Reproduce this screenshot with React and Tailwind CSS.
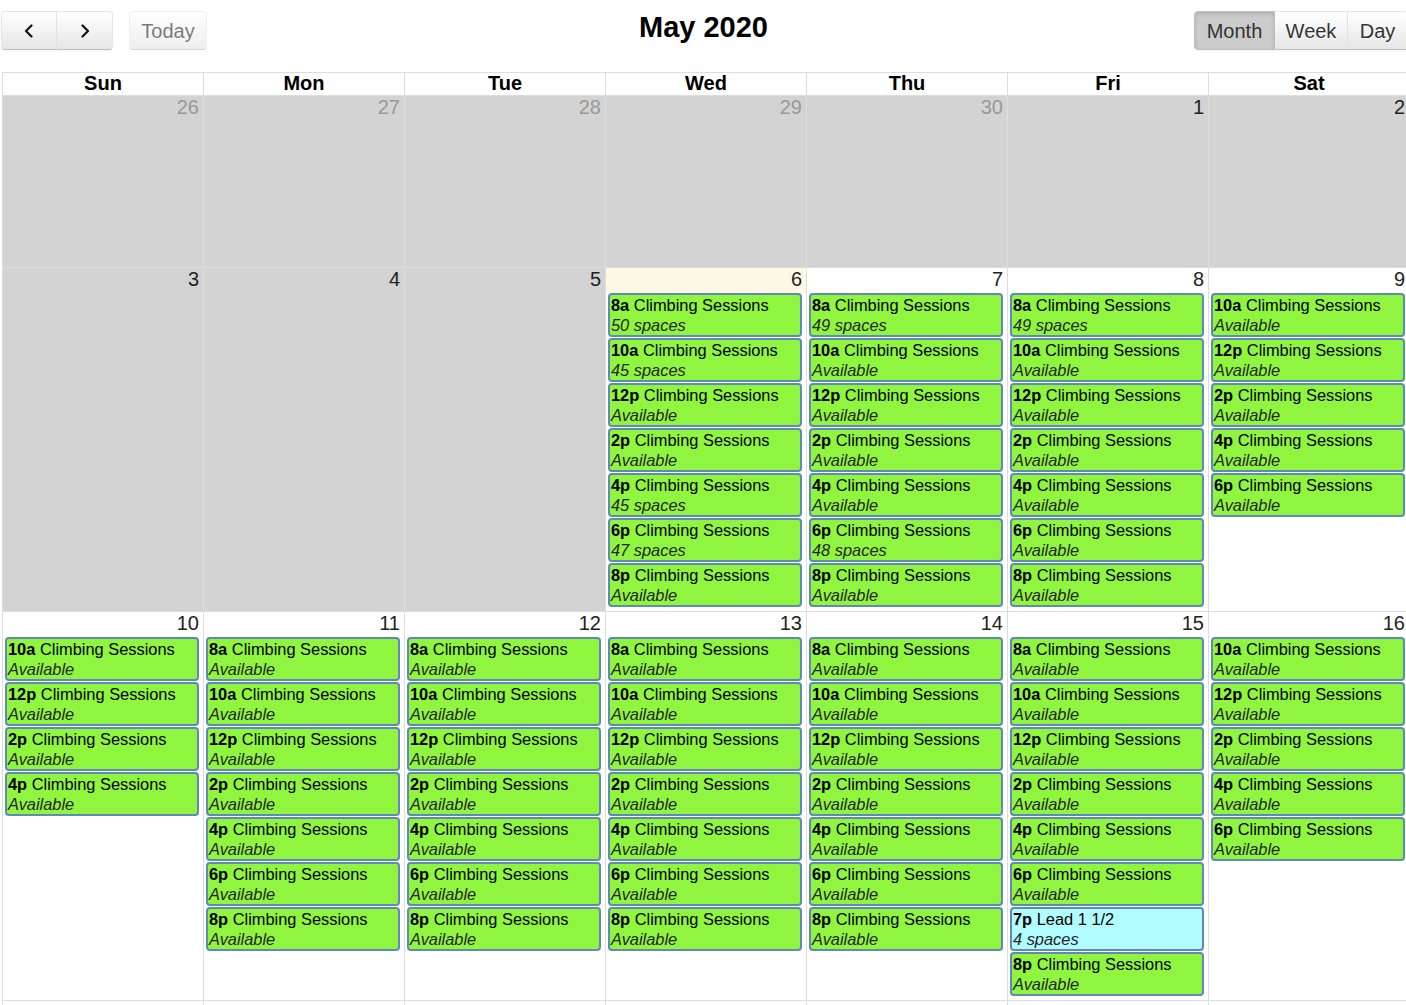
import React from "react";

const A = "Available";
const std7 = (spaces = {}) =>
  ["8a", "10a", "12p", "2p", "4p", "6p", "8p"].map((t) => ({ t, n: "Climbing Sessions", s: spaces[t] || A }));
const sat = () => ["10a", "12p", "2p", "4p", "6p"].map((t) => ({ t, n: "Climbing Sessions", s: A }));
const sun = () => ["10a", "12p", "2p", "4p"].map((t) => ({ t, n: "Climbing Sessions", s: A }));

const weeks = [
  {
    minH: "min-h-[172px]",
    days: [
      { d: 26, other: true, past: true },
      { d: 27, other: true, past: true },
      { d: 28, other: true, past: true },
      { d: 29, other: true, past: true },
      { d: 30, other: true, past: true },
      { d: 1, past: true },
      { d: 2, past: true },
    ],
  },
  {
    minH: "",
    days: [
      { d: 3, past: true },
      { d: 4, past: true },
      { d: 5, past: true },
      { d: 6, today: true, ev: std7({ "8a": "50 spaces", "10a": "45 spaces", "4p": "45 spaces", "6p": "47 spaces" }) },
      { d: 7, ev: std7({ "8a": "49 spaces", "6p": "48 spaces" }) },
      { d: 8, ev: std7({ "8a": "49 spaces" }) },
      { d: 9, ev: sat() },
    ],
  },
  {
    minH: "",
    days: [
      { d: 10, ev: sun() },
      { d: 11, ev: std7() },
      { d: 12, ev: std7() },
      { d: 13, ev: std7() },
      { d: 14, ev: std7() },
      {
        d: 15,
        ev: [
          ...std7().slice(0, 6),
          { t: "7p", n: "Lead 1 1/2", s: "4 spaces", lead: true },
          { t: "8p", n: "Climbing Sessions", s: A },
        ],
      },
      { d: 16, ev: sat() },
    ],
  },
  {
    minH: "min-h-[172px]",
    days: [17, 18, 19, 20, 21, 22, 23].map((d) => ({ d })),
  },
];

function Chevron({ dir }) {
  return (
    <svg width="12" height="14" viewBox="0 0 12 14" fill="none">
      {dir === "left" ? (
        <polyline points="8.5,1.5 3,7 8.5,12.5" stroke="#111" strokeWidth="2.2" strokeLinecap="round" strokeLinejoin="round" />
      ) : (
        <polyline points="3.5,1.5 9,7 3.5,12.5" stroke="#111" strokeWidth="2.2" strokeLinecap="round" strokeLinejoin="round" />
      )}
    </svg>
  );
}

const btn =
  "h-[39px] flex items-center justify-center text-[20px] text-[#333] border border-[#e6e6e6] border-b-[#bfbfbf] bg-linear-to-b from-white to-[#e6e6e6] shadow-[inset_0_1px_0_rgba(255,255,255,0.2),0_1px_2px_rgba(0,0,0,0.05)] [text-shadow:0_1px_1px_rgba(255,255,255,0.75)]";

function Event({ e }) {
  return (
    <div
      className={`ml-[2px] mr-[4px] mb-[1px] h-[44px] rounded-[4px] border-2 border-[#5f89b6] px-[1px] text-[16.4px] leading-[20px] text-black overflow-hidden whitespace-nowrap ${
        e.lead ? "bg-[#b0fcff]" : "bg-[#90f53f]"
      }`}
    >
      <div>
        <span className="font-bold">{e.t}</span> {e.n}
      </div>
      <div className="italic text-[#262626]">{e.s}</div>
    </div>
  );
}

export default function App() {
  return (
    <div className="w-[1406px] h-[1005px] overflow-hidden bg-white" style={{ fontFamily: '"Liberation Sans", Arial, sans-serif' }}>
      <div className="w-[1410px] pl-[1px]">
        {/* toolbar */}
        <div className="mt-[11px] h-[39px] mb-[22px] relative flex items-center">
          <div className="flex">
            <button className={`${btn} w-[56px] rounded-l-[4px]`}>
              <Chevron dir="left" />
            </button>
            <button className={`${btn} w-[56px] rounded-r-[4px] border-l-0`}>
              <Chevron dir="right" />
            </button>
          </div>
          <button className={`${btn} ml-[16px] w-[78px] rounded-[4px] opacity-65 shadow-none`}>Today</button>
          <div className="absolute left-0 right-0 top-0 h-[33px] flex items-center justify-center pointer-events-none pr-[4px]">
            <h2 className="text-[29px] font-bold text-black leading-none">May 2020</h2>
          </div>
          <div className="ml-auto flex mr-[2px]">
            <button className="h-[39px] w-[81px] flex items-center justify-center text-[20px] text-[#333] rounded-l-[4px] border border-[#bfbfbf] bg-[#cccccc] shadow-[inset_0_2px_4px_rgba(0,0,0,0.15),0_1px_2px_rgba(0,0,0,0.05)]">
              Month
            </button>
            <button className={`${btn} w-[73px] border-l-0`}>Week</button>
            <button className={`${btn} w-[60px] border-l-0 rounded-r-[4px]`}>Day</button>
          </div>
        </div>

        {/* grid */}
        <div className="ml-[1px]">
          <div className="flex border-t border-[#ddd]">
            {["Sun", "Mon", "Tue", "Wed", "Thu", "Fri", "Sat"].map((d) => (
              <div key={d} className="w-[201px] shrink-0 border-l border-[#ddd] h-[22px] text-center text-[20px] font-bold leading-[20px] text-black">
                {d}
              </div>
            ))}
          </div>
          {weeks.map((w, wi) => (
            <div key={wi} className={`flex border-t border-[#ddd] ${w.minH}`}>
              {w.days.map((day, di) => (
                <div
                  key={di}
                  className={`w-[201px] shrink-0 border-l border-[#ddd] pb-[3px] ${day.past ? "bg-[#d3d3d3]" : "bg-white"}`}
                >
                  <div
                    className={`h-[25px] pr-[4px] text-right text-[20px] leading-[23px] ${
                      day.other ? "text-[#999]" : "text-[#222]"
                    } ${day.today ? "bg-[#fcf8e3]" : ""}`}
                  >
                    {day.d}
                  </div>
                  {(day.ev || []).map((e, ei) => (
                    <Event key={ei} e={e} />
                  ))}
                </div>
              ))}
            </div>
          ))}
        </div>
      </div>
    </div>
  );
}
